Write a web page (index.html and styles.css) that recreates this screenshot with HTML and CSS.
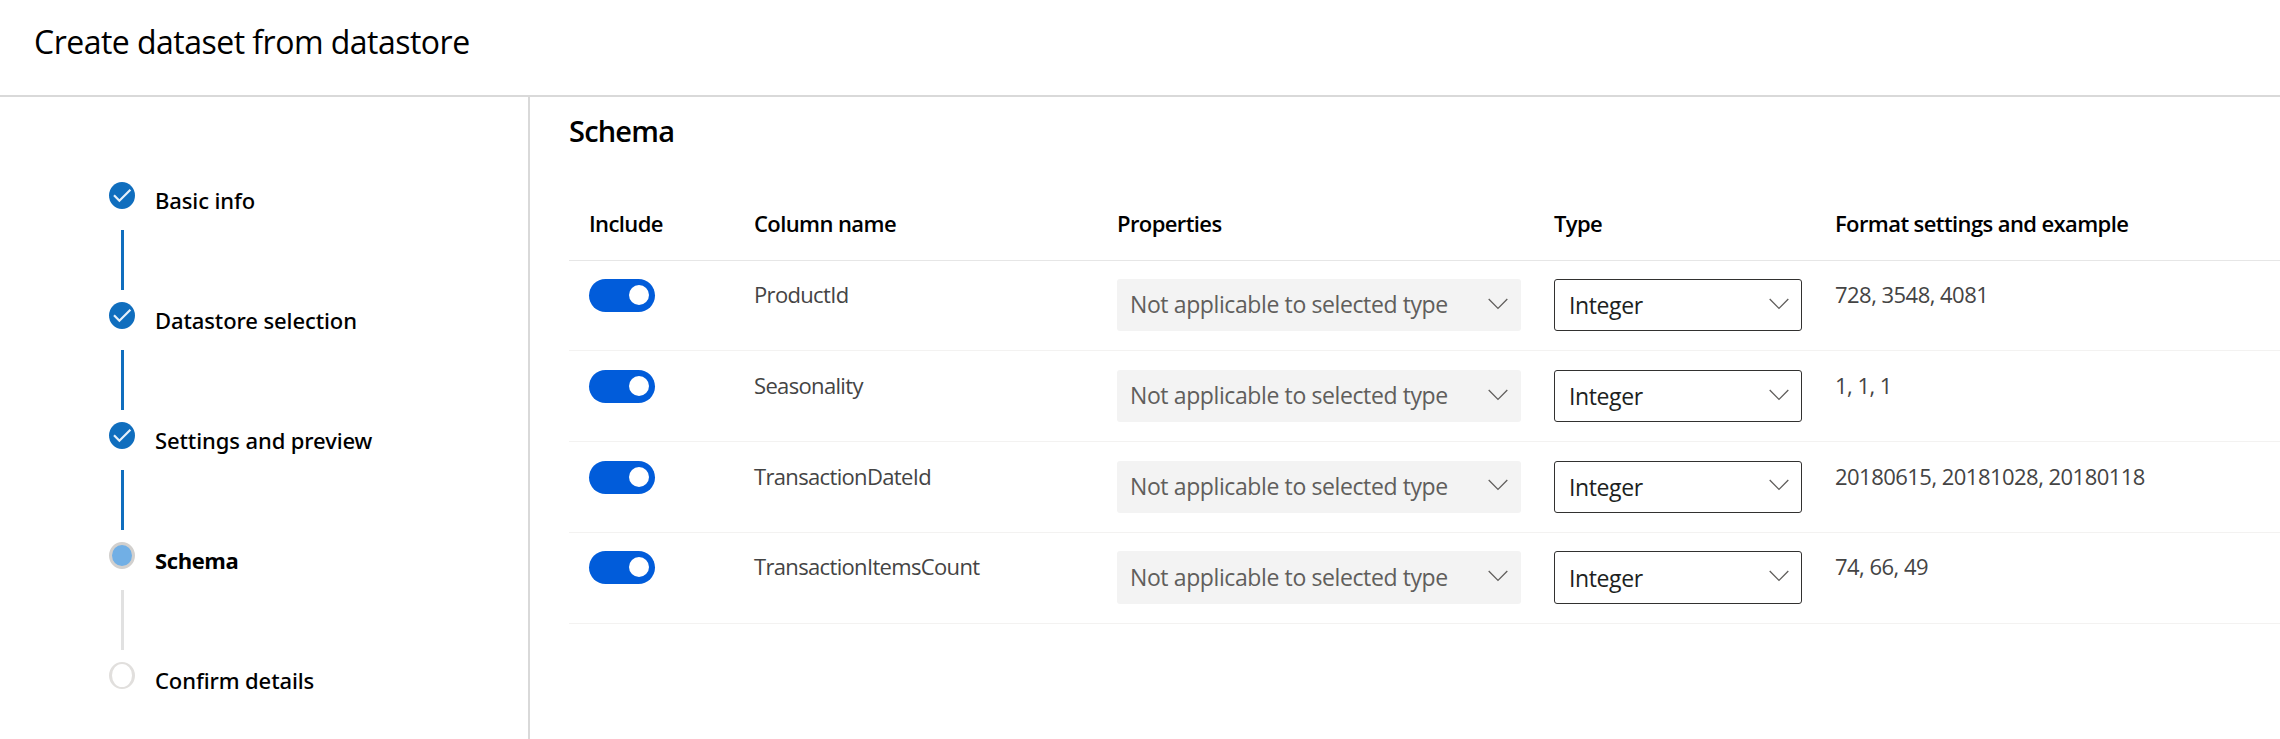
FILE: index.html
```html
<!DOCTYPE html>
<html lang="en">
<head>
<meta charset="utf-8">
<title>Create dataset from datastore</title>
<link rel="stylesheet" href="styles.css">
</head>
<body>
<svg class="defs" aria-hidden="true">
  <symbol id="chevron" viewBox="0 0 20 12"><path d="M0.7 1 L10 10.4 L19.3 1" fill="none" stroke="currentColor" stroke-width="1.3"/></symbol>
  <symbol id="check" viewBox="0 0 26 27"><path d="M5 13.2 L10.4 18.8 L21.4 7.8" fill="none" stroke="#e6f0fa" stroke-width="2.2"/></symbol>
</svg>
<header class="header"><h1 class="title">Create dataset from datastore</h1></header>
<div class="layout">
  <nav class="steps">
    <div class="step done"><div class="rail"><span class="dot"><svg><use href="#check"/></svg></span><span class="line"></span></div><span class="label">Basic info</span></div>
    <div class="step done"><div class="rail"><span class="dot"><svg><use href="#check"/></svg></span><span class="line"></span></div><span class="label">Datastore selection</span></div>
    <div class="step done"><div class="rail"><span class="dot"><svg><use href="#check"/></svg></span><span class="line"></span></div><span class="label">Settings and preview</span></div>
    <div class="step current"><div class="rail"><span class="dot"></span><span class="line"></span></div><span class="label">Schema</span></div>
    <div class="step last"><div class="rail"><span class="dot"></span></div><span class="label">Confirm details</span></div>
  </nav>
  <main class="content">
    <h2 class="heading">Schema</h2>
    <div class="row head"><span>Include</span><span>Column name</span><span>Properties</span><span>Type</span><span>Format settings and example</span></div>
    <div class="row"><span class="toggle"></span><span>ProductId</span><div class="select disabled"><span>Not applicable to selected type</span><svg><use href="#chevron"/></svg></div><div class="select"><span>Integer</span><svg><use href="#chevron"/></svg></div><span class="sample">728, 3548, 4081</span></div>
    <div class="row"><span class="toggle"></span><span>Seasonality</span><div class="select disabled"><span>Not applicable to selected type</span><svg><use href="#chevron"/></svg></div><div class="select"><span>Integer</span><svg><use href="#chevron"/></svg></div><span class="sample">1, 1, 1</span></div>
    <div class="row"><span class="toggle"></span><span>TransactionDateId</span><div class="select disabled"><span>Not applicable to selected type</span><svg><use href="#chevron"/></svg></div><div class="select"><span>Integer</span><svg><use href="#chevron"/></svg></div><span class="sample">20180615, 20181028, 20180118</span></div>
    <div class="row"><span class="toggle"></span><span>TransactionItemsCount</span><div class="select disabled"><span>Not applicable to selected type</span><svg><use href="#chevron"/></svg></div><div class="select"><span>Integer</span><svg><use href="#chevron"/></svg></div><span class="sample">74, 66, 49</span></div>
  </main>
</div>
</body>
</html>
```
FILE: styles.css
```css
* { box-sizing: border-box; }
body {
  margin: 0;
  height: 739px;
  overflow: hidden;
  display: flex;
  flex-direction: column;
  background: #fff;
  color: #000;
  font-family: "Open Sans", "Noto Sans", sans-serif;
  font-size: 22px;
  white-space: nowrap;
}
.defs { display: none; }
.header {
  flex: none;
  height: 97px;
  padding-left: 34px;
  border-bottom: 2px solid #d9d9d9;
}
.title {
  margin: 0;
  font-size: 32px;
  font-weight: 400;
  line-height: 83px;
  letter-spacing: -0.52px;
}
.layout { flex: 1; min-height: 0; display: flex; }
.steps {
  width: 530px;
  padding: 85px 0 0 109px;
  border-right: 2px solid #d9d9d9;
}
.step { display: flex; gap: 20px; height: 120.1px; }
.last { height: 40px; }
.rail { width: 26px; display: flex; flex-direction: column; align-items: center; gap: 21px; }
.dot {
  width: 26px;
  height: 27px;
  border: 3px solid #e1dfdd;
  border-width: 2px 3px;
  border-radius: 50%;
}
.dot svg { display: block; width: 26px; height: 27px; }
.line { width: 3px; height: 60px; background: #e1e1e1; }
.done .dot { border: 0; background: #106ebe; }
.done .line { background: #106ebe; }
.current .dot { border: 3px solid #d2d0ce; background: #71afe5; }
.label { font-family: "Noto Sans", sans-serif; font-weight: 500; line-height: 37px; letter-spacing: -0.1px; }
.current .label { font-family: "Open Sans", sans-serif; font-weight: 700; letter-spacing: -0.4px; }
.content { flex: 1; padding-left: 39px; }
.heading {
  margin: 0;
  font-size: 29px;
  font-weight: 600;
  line-height: 67px;
  letter-spacing: -0.8px;
}
.row {
  display: grid;
  grid-template-columns: 165px 363px 437px 281px 1fr;
  align-items: start;
  height: 90.75px;
  padding: 18.5px 0 0 20px;
  border-bottom: 1px solid #f3f2f1;
  line-height: 30px;
  color: #444;
  letter-spacing: -0.66px;
}
.head {
  height: 96.7px;
  padding-top: 44.6px;
  border-color: #e6e6e6;
  line-height: 28px;
  font-weight: 600;
  color: #000;
  letter-spacing: -0.6px;
}
.toggle {
  width: 66px;
  height: 33px;
  padding: 6px;
  display: flex;
  justify-content: flex-end;
  border-radius: 17px;
  background: #015cda;
}
.toggle::after { content: ""; width: 20px; height: 20px; border-radius: 50%; background: #fff; }
.select {
  width: 248px;
  height: 52.3px;
  padding: 0 12px 0 14px;
  display: flex;
  align-items: center;
  justify-content: space-between;
  border: 1px solid #323130;
  border-radius: 3px;
  color: #201f1e;
  font-size: 23px;
  letter-spacing: -0.39px;
}
.select svg { width: 20px; height: 12px; margin-bottom: 3px; color: #605e5c; }
.disabled {
  width: 404px;
  padding: 0 13px;
  border: 0;
  background: #f3f3f3;
  color: #605e5c;
}
.disabled span { margin-bottom: 2px; }
.sample { letter-spacing: -0.53px; }
```
